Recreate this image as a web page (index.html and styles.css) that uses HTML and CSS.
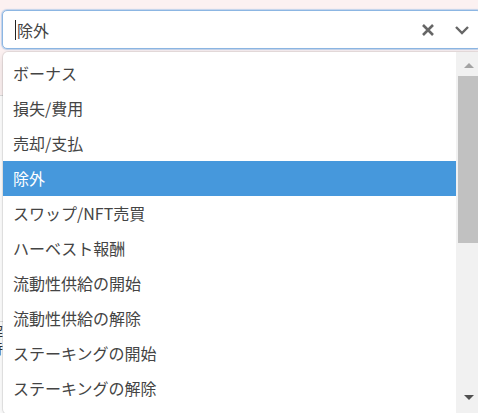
FILE: index.html
```html
<!DOCTYPE html>
<html lang="ja">
<head>
<meta charset="utf-8">
<title>除外</title>
<link rel="stylesheet" href="styles.css">
</head>
<body>
<div class="page">
  <div class="field">
    <div class="control">
      <div class="value"><span class="caret"></span><span class="input-text">除外</span></div>
      <div class="indicators">
        <svg class="icon clear" width="14" height="14" viewBox="0 0 14 14"><path d="M2 2 L12 12 M12 2 L2 12" stroke="#666" stroke-width="2.6" stroke-linecap="butt"/></svg>
        <svg class="icon chevron" width="16" height="10" viewBox="0 0 16 10"><path d="M2 2 L8 8 L14 2" fill="none" stroke="#666" stroke-width="2.4"/></svg>
      </div>
    </div>
    <div class="menu">
      <ul class="options">
        <li class="option">ボーナス</li>
        <li class="option">損失/費用</li>
        <li class="option">売却/支払</li>
        <li class="option selected">除外</li>
        <li class="option">スワップ/NFT売買</li>
        <li class="option">ハーベスト報酬</li>
        <li class="option">流動性供給の開始</li>
        <li class="option">流動性供給の解除</li>
        <li class="option">ステーキングの開始</li>
        <li class="option">ステーキングの解除</li>
      </ul>
      <div class="scrollbar">
        <div class="sb-btn"><span class="tri up"></span></div>
        <div class="sb-thumb"></div>
        <div class="sb-fill"></div>
        <div class="sb-btn bottom"><span class="tri down"></span></div>
      </div>
    </div>
  </div>
  <div class="backdrop">
    <div class="bg-row tall"></div>
    <div class="bg-row text"><span>解</span><span>持</span></div>
  </div>
</div>
</body>
</html>
```
FILE: styles.css
```css
html, body {
  margin: 0;
  padding: 0;
}
body {
  width: 478px;
  height: 413px;
  overflow: hidden;
  background: #ffffff;
  font-family: "Noto Sans CJK JP", "Noto Sans", sans-serif;
}
.page {
  position: relative;
  width: 478px;
  height: 413px;
  overflow: hidden;
  background: linear-gradient(#fcf1f1 0, #fcf1f1 95px, #dcdcdc 95px, #dcdcdc 96px, #ffffff 96px);
}
.field {
  position: relative;
  padding: 10px 0 0 2px;
  z-index: 2;
}
.control {
  box-sizing: border-box;
  width: 480px;
  height: 39px;
  background: #fff;
  border: 1px solid #8cb6e3;
  border-radius: 5px;
  box-shadow: 0 0 1px 1px rgba(120, 170, 225, 0.45);
  display: flex;
  align-items: center;
  justify-content: space-between;
}
.value {
  display: flex;
  align-items: center;
  padding-left: 12px;
  font-size: 16px;
  color: #444;
}
.caret {
  display: inline-block;
  width: 1px;
  height: 20px;
  background: #222;
  margin-right: 1px;
}
.input-text {
  line-height: 20px;
}
.indicators {
  display: flex;
  align-items: center;
  gap: 19px;
  padding-right: 11px;
}
.icon { display: block; }
.menu {
  position: absolute;
  top: 52px;
  left: 3px;
  width: 479px;
  height: 362px;
  background: #fff;
  border-radius: 5px;
  box-shadow: 0 0 0 1px rgba(0, 0, 0, 0.08), 0 3px 8px rgba(0, 0, 0, 0.12);
  display: flex;
  overflow: hidden;
}
.options {
  list-style: none;
  margin: 0;
  padding: 4px 0 0 0;
  flex: 1;
}
.option {
  height: 35px;
  line-height: 35px;
  padding-left: 10px;
  font-size: 16px;
  color: #444;
  white-space: nowrap;
}
.option.selected {
  background: #4698dc;
  color: #fff;
}
.scrollbar {
  width: 26px;
  background: #f1f1f1;
  display: flex;
  flex-direction: column;
}
.sb-btn {
  height: 24px;
  display: flex;
  align-items: center;
  justify-content: center;
  flex: none;
}
.sb-btn.bottom {
  height: 30px;
  align-items: flex-start;
}
.sb-thumb {
  height: 167px;
  margin-left: 2px;
  background: #c1c1c1;
  flex: none;
}
.sb-fill { flex: 1; }
.tri {
  width: 0;
  height: 0;
  border-left: 5px solid transparent;
  border-right: 5px solid transparent;
}
.tri.up {
  border-bottom: 5px solid #a3a3a3;
  margin-top: 2px;
}
.tri.down {
  border-top: 5px solid #505050;
  margin-top: 11px;
}
.backdrop {
  position: relative;
  z-index: 1;
}
.bg-row.tall {
  height: 215px;
  margin-top: 57px;
  border-bottom: 1px solid #dedede;
}
.bg-row.text {
  display: flex;
  flex-direction: column;
  margin-left: -12px;
  margin-top: 2px;
  font-size: 15px;
  line-height: 16px;
  color: #333;
}
```
